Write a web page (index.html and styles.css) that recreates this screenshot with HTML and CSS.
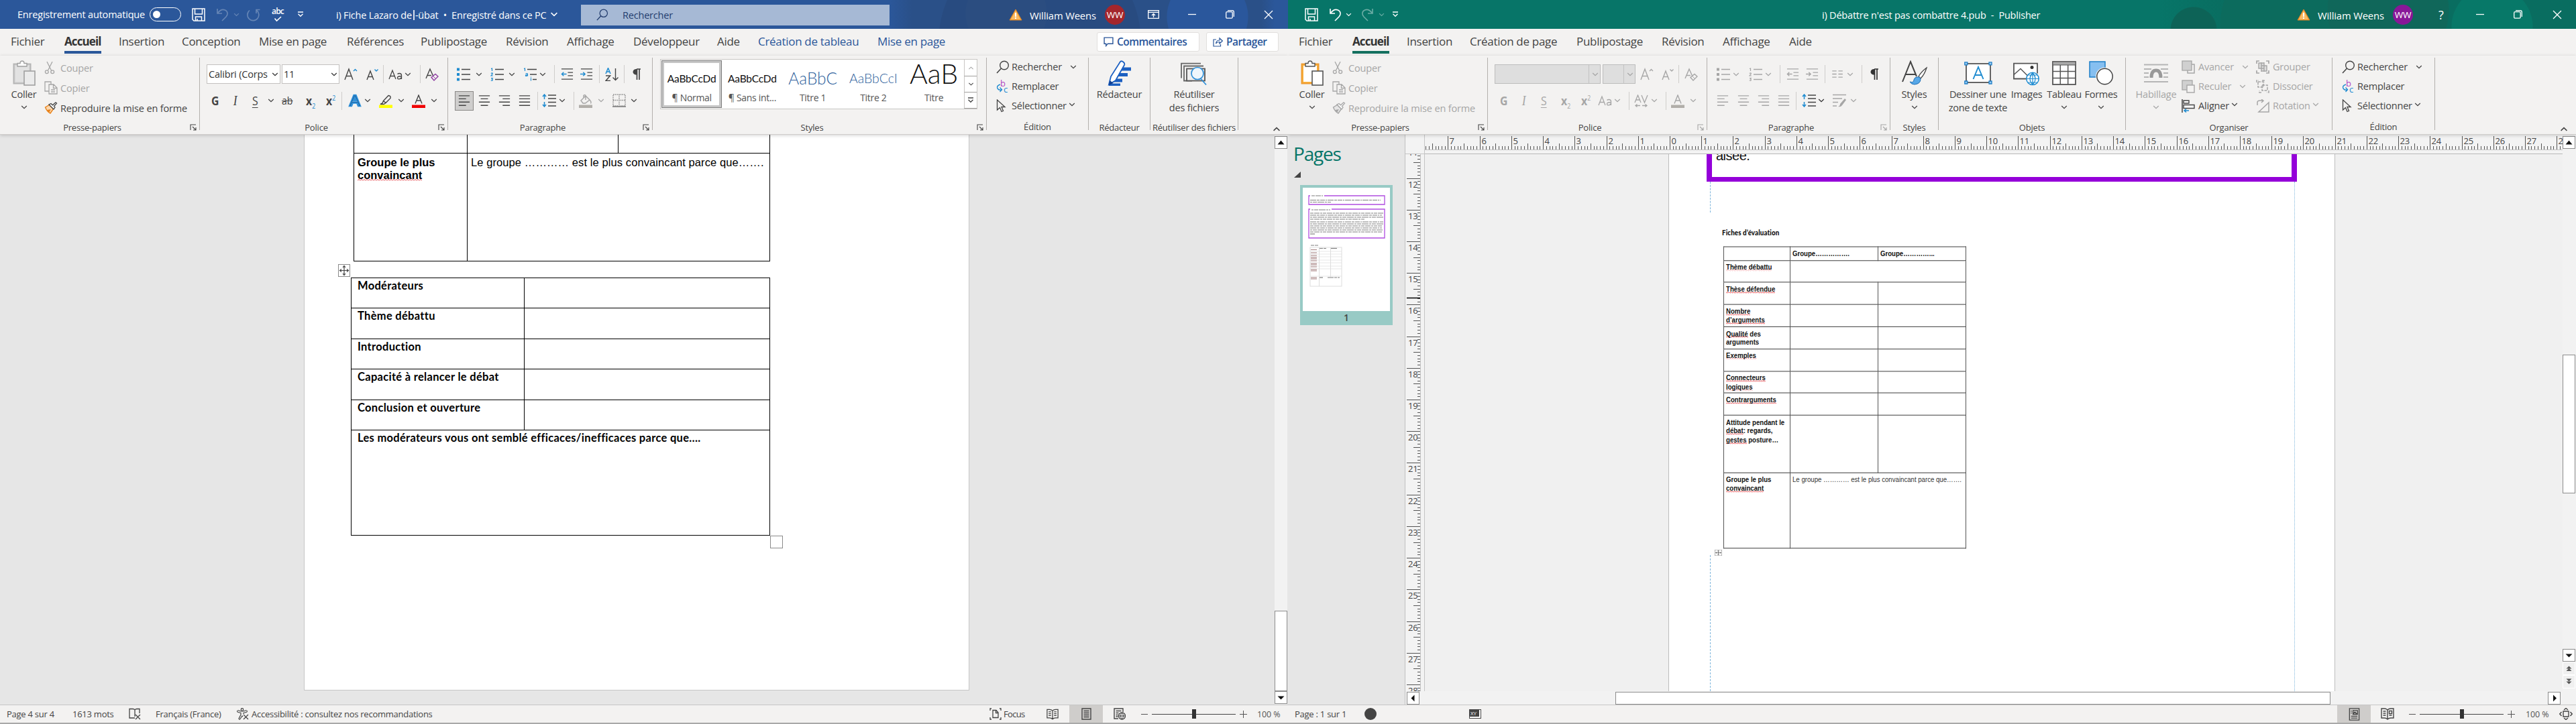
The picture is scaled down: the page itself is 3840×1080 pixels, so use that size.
FILE: index.html
```html
<!DOCTYPE html>
<html lang="fr">
<head>
<meta charset="utf-8">
<title>Word et Publisher</title>
<link rel="stylesheet" href="styles.css">
</head>
<body>
<svg class="defs" width="0" height="0" aria-hidden="true">
  <symbol id="chev" viewBox="0 0 10 6"><path d="M1.2 1l3.8 3.6L8.800 1" fill="none" stroke="currentColor" stroke-width="1.3"/></symbol>
  <symbol id="save" viewBox="0 0 20 20"><path d="M1 1h18v18H3l-2-2zM4.500 1v8h11V1M5.500 19v-6h9v6M8 19v-3" fill="none" stroke="currentColor" stroke-width="1.500"/></symbol>
  <symbol id="undo" viewBox="0 0 20 20"><path d="M2 1v7h7M2.500 7.500C6 3 10 1.500 13.500 3c4.500 2 4.500 7 1.500 10l-6 6" fill="none" stroke="currentColor" stroke-width="1.600"/></symbol>
  <symbol id="redo" viewBox="0 0 20 20"><path d="M18 1v7h-7M17.500 7.500C14 3 10 1.500 6.500 3 2 5 2 10 5 13l6 6" fill="none" stroke="currentColor" stroke-width="1.600"/></symbol>
  <symbol id="repeat" viewBox="0 0 20 20"><path d="M4 3.500A8.500 8.500 0 1 0 14 3M14 8V2.500h5.500" fill="none" stroke="currentColor" stroke-width="1.600"/></symbol>
  <symbol id="custom" viewBox="0 0 10 9"><path d="M1 1h8M1.500 3.800L5 7.300l3.500-3.500" fill="none" stroke="currentColor" stroke-width="1.300"/></symbol>
  <symbol id="glass" viewBox="0 0 20 20"><circle cx="12" cy="7.500" r="6.300" fill="none" stroke="currentColor" stroke-width="1.400"/><path d="M7.500 12L1 19" stroke="currentColor" stroke-width="1.500"/></symbol>
  <symbol id="warn" viewBox="0 0 20 18"><path d="M10 1L1 17h18z" fill="#f7a531" stroke="#d9822b"/><path d="M10 3L3 16h14z" fill="#fff" opacity=".25"/><path d="M9 6h2v6H9zM9 13h2v2H9z" fill="#fff"/></symbol>
  <symbol id="ribbonopt" viewBox="0 0 17 13"><path d="M.7.700h15.600v11.600H.7zM.7 3.300h15.600M8.500 11V5.500M6 8l2.500-2.500L11 8" fill="none" stroke="currentColor" stroke-width="1.300"/></symbol>
  <symbol id="min" viewBox="0 0 12 12"><path d="M0 5.500h12" stroke="currentColor" stroke-width="1.300"/></symbol>
  <symbol id="restore" viewBox="0 0 13 13"><rect x=".7" y="2.700" width="9.500" height="9.500" rx="1.500" fill="none" stroke="currentColor" stroke-width="1.300"/><path d="M3 .7h7q2.300 0 2.300 2.300v7" fill="none" stroke="currentColor" stroke-width="1.300"/></symbol>
  <symbol id="close" viewBox="0 0 14 14"><path d="M1 1l12 12M13 1L1 13" stroke="currentColor" stroke-width="1.300"/></symbol>
  <symbol id="comment" viewBox="0 0 14 14"><path d="M1 1h12v8.500H6L3.500 12.500v-3H1z" fill="none" stroke="currentColor" stroke-width="1.300"/></symbol>
  <symbol id="share" viewBox="0 0 15 15"><path d="M5 4H1v10h10.500v-3M4.500 10C5 6.500 7 5 10 5V2l4.300 4-4.300 4V7.500C7.500 7.500 6 8 4.500 10z" fill="none" stroke="currentColor" stroke-width="1.200"/></symbol>
  <symbol id="paste" viewBox="0 0 34 38"><rect x="1.500" y="5.500" width="25" height="29" fill="var(--board)" stroke="var(--boardline)" stroke-width="2"/><rect x="4" y="8" width="20" height="24" fill="var(--sheet)"/><path d="M7 9V4.500h4a3 3.500 0 0 1 6 0h4V9z" fill="#fafafa" stroke="var(--clip)" stroke-width="1.400"/><rect x="17" y="16" width="16" height="21" fill="var(--sheet2)" stroke="var(--clip)" stroke-width="1.600"/></symbol>
  <symbol id="cut" viewBox="0 0 16 20"><path d="M4 1l6.500 13M12 1L5.500 14" stroke="currentColor" stroke-width="1.300"/><circle cx="3.800" cy="16.300" r="2.400" fill="none" stroke="currentColor" stroke-width="1.300"/><circle cx="12.200" cy="16.300" r="2.400" fill="none" stroke="currentColor" stroke-width="1.300"/></symbol>
  <symbol id="copy" viewBox="0 0 20 20"><path d="M7 15H1V1h9v4M7 5h7l5 5v9H7zM13.500 5v5.500H19M10 13h6M10 16h6" fill="none" stroke="currentColor" stroke-width="1.300"/></symbol>
  <symbol id="brush" viewBox="0 0 20 18"><path d="M1.500 8l6-3.500 6 6L9 17C5 15 3 12 1.500 8z" fill="var(--brushfill)" stroke="var(--brushline)" stroke-width="1.400"/><path d="M4 12l3 4 3-5" fill="var(--brushline)"/><path d="M7 4l7 7 2-3-1.500-1.500L18.500 2 17 .8l-4.500 4L10 2.500z" fill="#fafafa" stroke="currentColor" stroke-width="1.300"/></symbol>
  <symbol id="launch" viewBox="0 0 10 10"><path d="M1 9V1h8M4 4l5 5M9 5v4H5" fill="none" stroke="currentColor" stroke-width="1.100"/></symbol>
  <symbol id="agrow" viewBox="0 0 20 20"><path d="M1 18L7 2l6 16M3 12.500h8" fill="none" stroke="currentColor" stroke-width="1.400"/><path d="M14 5l2.500-2.500L19 5" fill="none" stroke="var(--acc)" stroke-width="1.400"/></symbol>
  <symbol id="ashrink" viewBox="0 0 20 20"><path d="M2 18L7 5l5 13M3.700 13.500h6.600" fill="none" stroke="currentColor" stroke-width="1.400"/><path d="M13.500 2.500L16 5l2.500-2.500" fill="none" stroke="var(--acc)" stroke-width="1.400"/></symbol>
  <symbol id="aa" viewBox="0 0 22 20"><path d="M1 17L6 4l5 13M2.700 12.500h6.600" fill="none" stroke="currentColor" stroke-width="1.300"/><path d="M19.500 17V11.500q0-3-3-3-2 0-3 1M19.500 12.500c-4 0-6 .7-6 2.500 0 3 5 2.500 6-1" fill="none" stroke="currentColor" stroke-width="1.300"/></symbol>
  <symbol id="aclear" viewBox="0 0 20 20"><path d="M1 16L7 2l5 11M3 11.500h6" fill="none" stroke="currentColor" stroke-width="1.400"/><path d="M9 14.500l6-5 4 3.500-6 6z" fill="#f3f2f1" stroke="var(--eraser)" stroke-width="1.400"/><path d="M11.500 12.500l4 4" stroke="var(--eraser)"/></symbol>
  <symbol id="abold" viewBox="0 0 20 20"><path d="M2 18L8.500 2h3L18 18h-3l-1.800-4.500H6.800L5 18zM8 10.500h4L10 5.500z" fill="#fff" stroke="#2e8fd8" stroke-width="2.400"/><path d="M3 18L9.200 3h1.600L17 18M6 12.500h8" fill="none" stroke="#1665a8" stroke-width="1.200"/></symbol>
  <symbol id="hilite" viewBox="0 0 20 20"><path d="M6.500 9.500l7.500-8q4 .5 3 4L10 12.500zM6.500 9.500L5 13l-3 1.500h5L10 12.500" fill="none" stroke="currentColor" stroke-width="1.400"/><path d="M0 15.500h20V20H0z" fill="#ff0"/></symbol>
  <symbol id="acolor" viewBox="0 0 20 20"><path d="M5 13.500L10 1l5 12.500M6.700 9h6.600" fill="none" stroke="currentColor" stroke-width="1.400"/><path d="M0 15.500h20V20H0z" fill="var(--textcolor)"/></symbol>
  <symbol id="av" viewBox="0 0 22 20"><path d="M1 12L5.500 1 10 12M2.500 8h6M11 1l4.500 11L20 1M2 16.500h7M4.500 14.500l-2.500 2 2.500 2M12 16.500h7M16.500 14.500l2.500 2-2.500 2" fill="none" stroke="currentColor" stroke-width="1.300"/></symbol>
  <symbol id="bullets" viewBox="0 0 20 20"><path d="M0 .5h4v4H0zM0 8h4v4H0zM0 15.500h4v4H0z" fill="var(--acc)"/><path d="M7 2.500h13M7 10h13M7 17.500h13" stroke="currentColor" stroke-width="1.500"/></symbol>
  <symbol id="numbers" viewBox="0 0 20 20"><path d="M1 1.500L2.500 1v4M.8 8.500Q3.500 7 3.300 9L1 12h2.800M1 15.500h2.300L2.200 17q2 .5.5 2.300L.8 19" fill="none" stroke="var(--acc)" stroke-width="1.200"/><path d="M7 2.500h13M7 10h13M7 17.500h13" stroke="currentColor" stroke-width="1.500"/></symbol>
  <symbol id="multi" viewBox="0 0 20 20"><path d="M1 1.500L2.500 1v4M3.500 9q3-1 3 .5v3M6.500 10.500q-3.500 0-3 1.500 1 1 3-.5M11.500 15.500v4M11.500 13.500v1" fill="none" stroke="var(--acc)" stroke-width="1.200"/><path d="M6 2.500h14M10 10h10M14 17.500h6" stroke="currentColor" stroke-width="1.500"/></symbol>
  <symbol id="outdent" viewBox="0 0 20 20"><path d="M1 2h18M11 7.500h8M11 12.500h8M1 18h18" stroke="currentColor" stroke-width="1.400"/><path d="M9 10H1.500M4.500 7l-3 3 3 3" fill="none" stroke="var(--acc)" stroke-width="1.500"/></symbol>
  <symbol id="indent" viewBox="0 0 20 20"><path d="M1 2h18M11 7.500h8M11 12.500h8M1 18h18" stroke="currentColor" stroke-width="1.400"/><path d="M0 10h7.500M4.500 7l3 3-3 3" fill="none" stroke="var(--acc)" stroke-width="1.500"/></symbol>
  <symbol id="sort" viewBox="0 0 20 20"><path d="M1 9L4.500.500 8 9M2.200 6h4.600" fill="none" stroke="var(--acc)" stroke-width="1.500"/><path d="M1 12h6.500L1 19.500h7" fill="none" stroke="currentColor" stroke-width="1.500"/><path d="M15.500 1v18M11.500 14.500l4 4 4-4" fill="none" stroke="currentColor" stroke-width="1.400"/></symbol>
  <symbol id="pilcrow" viewBox="0 0 14 20"><path d="M7 2h6M7.500 2v16M11 2v16" stroke="currentColor" stroke-width="1.700"/><path d="M7.500 2C-.5 1.500-.5 11 7.500 10.500z" fill="currentColor"/></symbol>
  <symbol id="cols" viewBox="0 0 18 12"><path d="M0 1h7M0 6h7M0 11h7M10 1h7M10 6h7M10 11h7" stroke="currentColor" stroke-width="1.400"/></symbol>
  <symbol id="alleft" viewBox="0 0 18 20"><path d="M0 2h18M0 7h12M0 12.500h18M0 18h12" stroke="currentColor" stroke-width="1.500"/></symbol>
  <symbol id="alcenter" viewBox="0 0 18 20"><path d="M0 2h18M3 7h12M0 12.500h18M3 18h12" stroke="currentColor" stroke-width="1.500"/></symbol>
  <symbol id="alright" viewBox="0 0 18 20"><path d="M0 2h18M6 7h12M0 12.500h18M6 18h12" stroke="currentColor" stroke-width="1.500"/></symbol>
  <symbol id="aljust" viewBox="0 0 18 20"><path d="M0 2h18M0 7h18M0 12.500h18M0 18h18" stroke="currentColor" stroke-width="1.500"/></symbol>
  <symbol id="spacing" viewBox="0 0 21 20"><path d="M9 2h12M9 7h12M9 12.500h12M9 18h12" stroke="#444" stroke-width="1.500"/><path d="M3.500 1v7M1 4l2.500-3L6 4M3.500 19v-7M1 16l2.500 3L6 16" fill="none" stroke="#1e8bd0" stroke-width="1.500"/></symbol>
  <symbol id="fill" viewBox="0 0 20 20"><path d="M3 9l7-7 6 6-6.500 5H6zM7 5V1.500Q8.500-.5 10 1.500V8M16 8q3 3 1.500 5.500" fill="none" stroke="currentColor" stroke-width="1.400"/><path d="M0 15.500h20V20H0z" fill="#b1aea9"/></symbol>
  <symbol id="borders" viewBox="0 0 20 20"><path d="M1 1h18v17H1zM10 1v17M1 9.500h18" fill="none" stroke="#888" stroke-width="1.400" stroke-dasharray="1.500 1.200"/><path d="M0 19h20" stroke="#777" stroke-width="1.500"/></symbol>
  <symbol id="pstyle" viewBox="0 0 21 20"><path d="M0 1.500h20M0 7h14M0 12.500h8M0 18h6" stroke="currentColor" stroke-width="1.500"/><path d="M11 15l7-8 2 2-6 8q-2 3-6 2 3-1 3-4z" fill="currentColor"/></symbol>
  <symbol id="replace" viewBox="0 0 20 20"><text x="6" y="10" class="rb">b</text><text x="11" y="19" class="rc">c</text><path d="M6 7Q0 9 2 13q2 3 6 2M5.500 11.500l3 3.300-3 3.200" fill="none" stroke="#1e8bd0" stroke-width="1.400"/></symbol>
  <symbol id="cursor" viewBox="0 0 15 20"><path d="M1.500 1v15l4-3.500 2.500 6 2.500-1-2.500-6H13z" fill="none" stroke="currentColor" stroke-width="1.300"/></symbol>
  <symbol id="editor" viewBox="0 0 38 38"><path d="M14 21.500h17M18 13h18M3 37h17M8 30h15" stroke="#1b5fc1" stroke-width="5"/><path d="M3 36l3-12L20 2q2-2 5 1 2 2 1 4L13 30z" fill="#fff" stroke="#1b5fc1" stroke-width="1.800"/><path d="M3 37l1.500-7 5 4z" fill="#103f91"/></symbol>
  <symbol id="reuse" viewBox="0 0 40 34"><path d="M30 1H1v22M34 5H5v22h12" fill="none" stroke="#666" stroke-width="1.800"/><rect x="9" y="9" width="27" height="18" fill="#eee" stroke="#555" stroke-width="1.800"/><circle cx="25" cy="16" r="9" fill="#eef6fc" stroke="#2e8fd8" stroke-width="1.700"/><path d="M30 24l8 9" stroke="#2e8fd8" stroke-width="1.800"/></symbol>
  <symbol id="pstyles" viewBox="0 0 38 36"><path d="M1 31L13 1l9 22M5 20h15" fill="none" stroke="#444" stroke-width="2"/><path d="M37 10q-8 6-12 13l3 3q6-6 9-16z" fill="#fff" stroke="#444" stroke-width="1.300"/><path d="M23 24q4-1 5 3 0 7-9 8-5 0-7-4 6 2 6-3 1-4 5-4z" fill="#57a8e8" stroke="#1f6fb5"/></symbol>
  <symbol id="textbox" viewBox="0 0 42 34"><rect x="3" y="3" width="36" height="28" fill="#fff" stroke="#555" stroke-width="1.800"/><path d="M.8.800h4v4h-4zM37 .8h4v4h-4zM.8 29h4v4h-4zM37 29h4v4h-4z" fill="#9ccdf2" stroke="#1e7fc8" stroke-width="1.300"/><path d="M13.500 26L21 8l7.500 18M16.500 20h9" fill="none" stroke="#1e8bd0" stroke-width="1.900"/></symbol>
  <symbol id="images" viewBox="0 0 40 34"><path d="M21 24H1V1h35v15" fill="#fff" stroke="#555" stroke-width="1.800"/><path d="M1 18l10-9 14 14" fill="none" stroke="#555" stroke-width="1.500"/><circle cx="28" cy="7" r="2.500" fill="#333"/><circle cx="29" cy="24" r="9.200" fill="#fff" stroke="#1e8bd0" stroke-width="1.500"/><path d="M20 24h18M22 18.500h14M22 29.500h14M29 15v18M29 15q-8 9 0 18M29 15q8 9 0 18" fill="none" stroke="#1e8bd0" stroke-width="1.200"/></symbol>
  <symbol id="table" viewBox="0 0 36 36"><rect x="1" y="1" width="34" height="34" fill="#fff" stroke="#555" stroke-width="1.800"/><path d="M1 1h34v5H1z" fill="#aaa" stroke="#555"/><path d="M1 15.500h34M1 25.500h34M12.300 6v29M23.700 6v29" stroke="#555" stroke-width="1.500"/></symbol>
  <symbol id="shapes" viewBox="0 0 36 36"><rect x="1" y="1" width="23" height="23" fill="#86bff0" stroke="#1e7fc8" stroke-width="1.500"/><circle cx="23.500" cy="23" r="13.500" fill="#f3f2f1"/><circle cx="23.500" cy="23" r="11.700" fill="#fff" stroke="#444" stroke-width="1.500"/></symbol>
  <symbol id="wrap" viewBox="0 0 38 30"><path d="M1 2.500h36M1 9h11M26 9h11M1 15h7M30 15h7M1 21h7M30 21h7M1 28h36" stroke="#b5b5b5" stroke-width="2"/><path d="M12 22q0-11 7-11t7 11" fill="none" stroke="#999" stroke-width="5"/></symbol>
  <symbol id="fwd" viewBox="0 0 20 20"><path d="M15 6h4v13H9v-4" fill="none" stroke="currentColor" stroke-width="1.500"/><rect x="1" y="1" width="14" height="14" fill="#d0d0d0" stroke="currentColor" stroke-width="1.300"/></symbol>
  <symbol id="back" viewBox="0 0 20 20"><rect x="1" y="1" width="15" height="14" fill="#d0d0d0" stroke="currentColor" stroke-width="1.300"/><rect x="8" y="8" width="11" height="11" fill="#f3f2f1" stroke="currentColor" stroke-width="1.400"/></symbol>
  <symbol id="align" viewBox="0 0 20 20"><path d="M1 0v20" stroke="#444" stroke-width="1.500"/><path d="M3 2h8v4H3zM3 8.500h16v5H3z" fill="#fff" stroke="#444" stroke-width="1.400"/><path d="M11 17H4M7 14.500L4 17l3 2.500" fill="none" stroke="#1e8bd0" stroke-width="1.500"/></symbol>
  <symbol id="group" viewBox="0 0 20 20"><path d="M1 5V1h4M15 1h4v4M19 15v4h-4M5 19H1v-4" fill="none" stroke="currentColor" stroke-width="1.700"/><path d="M4 4h8v8H4zM8 8h8v8H8zM8 3v14M12 3v14" fill="#ddd" stroke="currentColor" stroke-width="1.400"/></symbol>
  <symbol id="ungroup" viewBox="0 0 20 20"><path d="M1 4V1h3M9 1h3v3M19 16v3h-3M8 19H5v-3M9 8h8v8H9zM3 3h8v8H3z" fill="none" stroke="currentColor" stroke-width="1.500" stroke-dasharray="4 1.500"/></symbol>
  <symbol id="rotate" viewBox="0 0 20 20"><path d="M19 5v14H4zM2 9V5q0-3 4-3h5M8 0l3 2.300L8 5" fill="none" stroke="currentColor" stroke-width="1.500"/></symbol>
  <symbol id="book" viewBox="0 0 20 18"><path d="M10 3Q8 1 5 1H1v14h4q3 0 5 2 2-2 5-2h4V1h-4q-3 0-5 2zM10 3v14M3.500 5h4M3.500 8h4M3.500 11h4M12.500 5h4M12.500 8h4M12.500 11h4" fill="none" stroke="currentColor" stroke-width="1.400"/></symbol>
  <symbol id="pubbook" viewBox="0 0 20 18"><path d="M10 3Q8 1 5 1H1v14h4q3 0 5 2 2-2 5-2h4V1h-4q-3 0-5 2zM10 3v14M3.500 5h4M3.500 8h4M3.500 11h4M12.500 11h4M12.500 4.500h4v4h-4z" fill="none" stroke="currentColor" stroke-width="1.400"/></symbol>
  <symbol id="page" viewBox="0 0 15 18"><path d="M1 1h13v16H1zM3.500 4.500h8M3.500 7.500h8M3.500 10.500h8M3.500 13.500h8" fill="none" stroke="currentColor" stroke-width="1.400"/></symbol>
  <symbol id="pubpage" viewBox="0 0 17 20"><path d="M1 1h15v18H1zM6.500 4h7v6h-7zM6.500 9l3-2.500L13 10M3 5h1.500M3 8h1.500M3.500 13h10M3.500 16h10" fill="none" stroke="currentColor" stroke-width="1.400"/></symbol>
  <symbol id="web" viewBox="0 0 18 18"><path d="M7 16H1V1h13v5M3.500 4.500h8M3.500 7.500h4M3.500 10.500h3M3.500 13h3" fill="none" stroke="currentColor" stroke-width="1.400"/><circle cx="12.500" cy="12" r="5" fill="#eee" stroke="currentColor" stroke-width="1.300"/><path d="M7.500 12h10M12.500 7q-4 5 0 10M12.500 7q4 5 0 10" fill="none" stroke="currentColor"/></symbol>
  <symbol id="focus" viewBox="0 0 18 18"><path d="M1 4V1h2M15 1h2v3M17 14v3h-2M3 17H1v-3M5 3.500h5l3 3.500v7.500H5zM9.500 3.500V7.500H13" fill="none" stroke="currentColor" stroke-width="1.300"/></symbol>
  <symbol id="proof" viewBox="0 0 18 18"><path d="M9 3v10M9 15H1V1.500h5q2 0 3 1.500 1-1.500 3-1.500h4V8M10 10l7 7M17 10l-7 7" fill="none" stroke="currentColor" stroke-width="1.300"/></symbol>
  <symbol id="access" viewBox="0 0 18 18"><circle cx="8" cy="2.500" r="1.800" fill="none" stroke="currentColor" stroke-width="1.200"/><path d="M1 4q-1 2 1 2.500l4 1V10l-3 6q1 2 2 .5L8 12l1 1M15 4q1 2-1 2.500l-4 1V9M1.500 3.500L6 5h4l4.500-1.500M10 10l7 7M17 10l-7 7" fill="none" stroke="currentColor" stroke-width="1.200"/></symbol>
  <symbol id="fit" viewBox="0 0 20 18"><path d="M6 5h8v8H6zM7 3l3-2.500L13 3M7 15l3 2.500 3-2.500M3.500 6L.8 9l2.700 3M16.500 6l2.700 3-2.700 3" fill="none" stroke="currentColor" stroke-width="1.400"/></symbol>
  <symbol id="move" viewBox="0 0 18 19"><rect x=".5" y=".5" width="17" height="18" fill="#fff" stroke="#8a8a8a"/><path d="M9 2.500v14M2.500 9.500h13M7 5l2-2.500L11 5M7 14l2 2.500 2-2.500M5 7.500l-2.500 2 2.500 2M13 7.500l2.500 2-2.500 2" fill="none" stroke="#444" stroke-width="1.200"/></symbol>
  <symbol id="up" viewBox="0 0 19 19"><rect x=".5" y=".5" width="18" height="18" fill="#fff" stroke="#8c8c8c"/><path d="M9.500 6.500l5 6h-10z" fill="#111"/></symbol>
  <symbol id="down" viewBox="0 0 19 19"><rect x=".5" y=".5" width="18" height="18" fill="#fff" stroke="#8c8c8c"/><path d="M9.500 12.500l5-5h-10z" fill="#111"/></symbol>
  <symbol id="left" viewBox="0 0 19 19"><rect x=".5" y=".5" width="18" height="18" fill="#fff" stroke="#8c8c8c"/><path d="M6.500 9.500l5-5v10z" fill="#111"/></symbol>
  <symbol id="right" viewBox="0 0 19 19"><rect x=".5" y=".5" width="18" height="18" fill="#fff" stroke="#8c8c8c"/><path d="M13 9.500l-5-5v10z" fill="#111"/></symbol>
  <symbol id="pgup" viewBox="0 0 19 20"><path d="M.5.500h18v19H.5z" fill="#f0f0f0" stroke="#fff"/><path d="M9.500 6.500l4 4h-8zM9.500 10l4 4h-8z" fill="#555"/></symbol>
  <symbol id="pgdown" viewBox="0 0 19 20"><path d="M.5.500h18v19H.5z" fill="#f0f0f0" stroke="#fff"/><path d="M9.500 9.500l4-4h-8zM9.500 13.500l4-4h-8z" fill="#555"/></symbol>
</svg>

<div class="desktop">
<!-- Word -->
<section class="app word">
  <header class="title">
    <span>Enregistrement automatique</span>
    <span class="toggle"></span>
    <svg width="20" height="20"><use href="#save"/></svg>
    <svg class="dim" width="20" height="20"><use href="#undo"/></svg>
    <svg class="dim" width="9" height="6"><use href="#chev"/></svg>
    <svg class="dim" width="20" height="20"><use href="#repeat"/></svg>
    <span class="spell"><b>abc</b><svg width="12" height="8" viewBox="0 0 12 8"><path d="M1.500 3.500l3 3.500L11 1" fill="none" stroke="#fff" stroke-width="1.600"/></svg></span>
    <svg width="10" height="9"><use href="#custom"/></svg>
    <span class="doc">i) Fiche Lazaro de<i class="ibeam"></i>-übat&nbsp; •&nbsp; Enregistré dans ce PC</span>
    <svg width="12" height="7"><use href="#chev"/></svg>
    <span class="search"><svg width="18" height="18"><use href="#glass"/></svg>Rechercher</span>
    <svg width="20" height="18"><use href="#warn"/></svg>
    <span class="user">William Weens</span>
    <span class="avatar">WW</span>
    <svg width="17" height="13"><use href="#ribbonopt"/></svg>
    <svg width="12" height="12"><use href="#min"/></svg>
    <svg width="13" height="13"><use href="#restore"/></svg>
    <svg width="14" height="14"><use href="#close"/></svg>
  </header>
  <nav class="tabs">
    <span>Fichier</span><b>Accueil</b><span>Insertion</span><span>Conception</span><span>Mise en page</span><span>Références</span><span>Publipostage</span><span>Révision</span><span>Affichage</span><span>Développeur</span><span>Aide</span><span class="ctx">Création de tableau</span><span class="ctx">Mise en page</span>
    <span class="pill"><svg width="15" height="15"><use href="#comment"/></svg>Commentaires</span>
    <span class="pill"><svg width="15" height="15"><use href="#share"/></svg>Partager</span>
  </nav>
  <div class="ribbon">
    <div class="group g-clip">
      <div class="body cliprow off-paste">
        <div class="big"><svg width="34" height="38"><use href="#paste"/></svg><span>Coller</span><svg width="10" height="6"><use href="#chev"/></svg></div>
        <div class="list3">
          <div class="off"><svg width="16" height="20"><use href="#cut"/></svg>Couper</div>
          <div class="off"><svg width="20" height="20"><use href="#copy"/></svg>Copier</div>
          <div><svg width="20" height="18"><use href="#brush"/></svg>Reproduire la mise en forme</div>
        </div>
      </div>
      <div class="label"><span>Presse-papiers</span><svg width="10" height="10"><use href="#launch"/></svg></div>
    </div>
    <div class="group g-font">
      <div class="body">
        <div class="row w-font1">
          <span class="combo">Calibri (Corps<svg width="10" height="6"><use href="#chev"/></svg></span>
          <span class="combo">11<svg width="10" height="6"><use href="#chev"/></svg></span>
          <svg width="20" height="20"><use href="#agrow"/></svg><svg width="20" height="20"><use href="#ashrink"/></svg><i class="sep"></i>
          <svg width="22" height="20"><use href="#aa"/></svg><svg width="10" height="6"><use href="#chev"/></svg><i class="sep"></i>
          <svg width="20" height="20"><use href="#aclear"/></svg>
        </div>
        <div class="row low w-font2">
          <b class="g">G</b><i class="g it">I</i><span class="g ul">S</span><svg width="10" height="6"><use href="#chev"/></svg>
          <s class="g st">ab</s><b class="g">x<sub>2</sub></b><b class="g">x<sup>2</sup></b><i class="sep"></i>
          <svg width="20" height="20"><use href="#abold"/></svg><svg width="10" height="6"><use href="#chev"/></svg>
          <svg class="bar" width="20" height="20"><use href="#hilite"/></svg><svg width="10" height="6"><use href="#chev"/></svg>
          <svg class="bar" width="20" height="20"><use href="#acolor"/></svg><svg width="10" height="6"><use href="#chev"/></svg>
        </div>
      </div>
      <div class="label"><span>Police</span><svg width="10" height="10"><use href="#launch"/></svg></div>
    </div>
    <div class="group g-para">
      <div class="body">
        <div class="row w-para1">
          <svg width="20" height="20"><use href="#bullets"/></svg><svg width="10" height="6"><use href="#chev"/></svg>
          <svg width="20" height="20"><use href="#numbers"/></svg><svg width="10" height="6"><use href="#chev"/></svg>
          <svg width="20" height="20"><use href="#multi"/></svg><svg width="10" height="6"><use href="#chev"/></svg><i class="sep"></i>
          <svg width="19" height="19"><use href="#outdent"/></svg><svg width="19" height="19"><use href="#indent"/></svg><i class="sep"></i>
          <svg width="20" height="20"><use href="#sort"/></svg><i class="sep"></i><svg width="14" height="20"><use href="#pilcrow"/></svg>
        </div>
        <div class="row low w-para2">
          <span class="selbox"><svg width="18" height="18"><use href="#alleft"/></svg></span>
          <svg width="18" height="18"><use href="#alcenter"/></svg><svg width="18" height="18"><use href="#alright"/></svg><svg width="18" height="18"><use href="#aljust"/></svg><i class="sep"></i>
          <svg width="21" height="20"><use href="#spacing"/></svg><svg width="10" height="6"><use href="#chev"/></svg><i class="sep"></i>
          <svg class="bar off" width="20" height="20"><use href="#fill"/></svg><svg class="off" width="10" height="6"><use href="#chev"/></svg>
          <svg width="20" height="20"><use href="#borders"/></svg><svg width="10" height="6"><use href="#chev"/></svg>
        </div>
      </div>
      <div class="label"><span>Paragraphe</span><svg width="10" height="10"><use href="#launch"/></svg></div>
    </div>
    <div class="group g-styles">
      <div class="body">
        <div class="gallery">
          <div class="sty sel"><span>AaBbCcDd</span><em>¶ Normal</em></div>
          <div class="sty"><span>AaBbCcDd</span><em>¶ Sans int...</em></div>
          <div class="sty t1"><span>AaBbC</span><em>Titre 1</em></div>
          <div class="sty t2"><span>AaBbCcI</span><em>Titre 2</em></div>
          <div class="sty t3"><span>AaB</span><em>Titre</em></div>
          <div class="gscroll"><span class="off"><svg class="flip" width="9" height="5"><use href="#chev"/></svg></span><span><svg width="9" height="5"><use href="#chev"/></svg></span><span><svg width="10" height="9"><use href="#custom"/></svg></span></div>
        </div>
      </div>
      <div class="label"><span>Styles</span><svg width="10" height="10"><use href="#launch"/></svg></div>
    </div>
    <div class="group g-edit">
      <div class="body edit">
        <div><svg width="20" height="20"><use href="#glass"/></svg>Rechercher<svg class="far" width="10" height="6"><use href="#chev"/></svg></div>
        <div><svg width="20" height="20"><use href="#replace"/></svg>Remplacer</div>
        <div><svg width="15" height="20"><use href="#cursor"/></svg>Sélectionner<svg class="near" width="10" height="6"><use href="#chev"/></svg></div>
      </div>
      <div class="label nol"><span>Édition</span></div>
    </div>
    <div class="group g-red">
      <div class="body"><div class="big wide"><svg width="38" height="38"><use href="#editor"/></svg><span>Rédacteur</span></div></div>
      <div class="label nol"><span>Rédacteur</span></div>
    </div>
    <div class="group g-reuse">
      <div class="body"><div class="big wide"><svg class="lower" width="40" height="38" viewBox="0 -3 40 37"><use href="#reuse" width="40" height="34"/></svg><span>Réutiliser<br>des fichiers</span></div></div>
      <div class="label nol"><span>Réutiliser des fichiers</span></div>
    </div>
    <svg class="collapse" width="12" height="7"><use href="#chev"/></svg>
  </div>
  <main class="wwork">
    <div class="wcanvas">
      <article class="sheet">
        <table class="tbl1">
          <colgroup><col class="a"><col class="b"><col class="c"></colgroup>
          <tr class="cut"><td></td><td></td><td></td></tr>
          <tr class="tall"><td><b>Groupe le plus<br><u class="sq">convaincant</u></b></td><td colspan="2" class="wide">Le groupe ………… est le plus convaincant parce que…….</td></tr>
        </table>
        <table class="tbl2">
          <colgroup><col class="a"><col class="b"></colgroup>
          <tr><td>Modérateurs</td><td></td></tr>
          <tr><td>Thème débattu</td><td></td></tr>
          <tr><td>Introduction</td><td></td></tr>
          <tr><td>Capacité à relancer le débat</td><td></td></tr>
          <tr><td>Conclusion et ouverture</td><td></td></tr>
          <tr class="last"><td colspan="2">Les modérateurs vous ont semblé efficaces/inefficaces parce que….</td></tr>
        </table>
        <svg class="mv" width="18" height="19"><use href="#move"/></svg>
        <i class="rs"></i>
      </article>
    </div>
    <div class="vscroll wv"><svg width="19" height="19"><use href="#up"/></svg><i class="thumb"></i><svg width="19" height="19"><use href="#down"/></svg></div>
  </main>
  <footer class="status w-status">
    <span>Page 4 sur 4</span><span>1613 mots</span><svg width="18" height="18"><use href="#proof"/></svg><span>Français (France)</span>
    <svg width="18" height="18"><use href="#access"/></svg><span>Accessibilité : consultez nos recommandations</span>
    <svg width="18" height="18"><use href="#focus"/></svg><span class="tight">Focus</span>
    <svg width="18" height="17"><use href="#book"/></svg>
    <span class="view"><svg width="15" height="18"><use href="#page"/></svg></span>
    <svg width="18" height="18"><use href="#web"/></svg>
    <i class="minus"></i><i class="slider"></i><i class="plus"></i><span class="pct">100 %</span>
  </footer>
</section>

<!-- Publisher -->
<section class="app pub">
  <header class="title">
    <svg width="20" height="20"><use href="#save"/></svg>
    <svg width="20" height="20"><use href="#undo"/></svg>
    <svg width="9" height="6"><use href="#chev"/></svg>
    <svg class="dim" width="20" height="20"><use href="#redo"/></svg>
    <svg class="dim" width="9" height="6"><use href="#chev"/></svg>
    <svg width="10" height="9"><use href="#custom"/></svg>
    <span class="doc">i) Débattre n'est pas combattre 4.pub&nbsp; -&nbsp; Publisher</span>
    <svg width="20" height="18"><use href="#warn"/></svg>
    <span class="user">William Weens</span>
    <span class="avatar">WW</span>
    <span class="help">?</span>
    <svg width="12" height="12"><use href="#min"/></svg>
    <svg width="13" height="13"><use href="#restore"/></svg>
    <svg width="14" height="14"><use href="#close"/></svg>
  </header>
  <nav class="tabs">
    <span>Fichier</span><b>Accueil</b><span>Insertion</span><span>Création de page</span><span>Publipostage</span><span>Révision</span><span>Affichage</span><span>Aide</span>
  </nav>
  <div class="ribbon">
    <div class="group g-clip">
      <div class="body cliprow on-paste">
        <div class="big"><svg width="34" height="38"><use href="#paste"/></svg><span>Coller</span><svg width="10" height="6"><use href="#chev"/></svg></div>
        <div class="list3 off">
          <div><svg width="16" height="20"><use href="#cut"/></svg>Couper</div>
          <div><svg width="20" height="20"><use href="#copy"/></svg>Copier</div>
          <div><svg width="20" height="18"><use href="#brush"/></svg>Reproduire la mise en forme</div>
        </div>
      </div>
      <div class="label"><span>Presse-papiers</span><svg width="10" height="10"><use href="#launch"/></svg></div>
    </div>
    <div class="group p-font">
      <div class="body off">
        <div class="row p-font1">
          <span class="combo gray"><svg width="10" height="6"><use href="#chev"/></svg></span>
          <span class="combo gray"><svg width="10" height="6"><use href="#chev"/></svg></span>
          <svg width="20" height="20"><use href="#agrow"/></svg><svg width="20" height="20"><use href="#ashrink"/></svg><i class="sep"></i>
          <svg width="20" height="20"><use href="#aclear"/></svg>
        </div>
        <div class="row low p-font2">
          <b class="g">G</b><i class="g it">I</i><span class="g ul">S</span><b class="g">x<sub>2</sub></b><b class="g">x<sup>2</sup></b>
          <svg width="22" height="20"><use href="#aa"/></svg><svg width="10" height="6"><use href="#chev"/></svg><i class="sep"></i>
          <svg class="bar" width="22" height="20"><use href="#av"/></svg><svg width="10" height="6"><use href="#chev"/></svg><i class="sep"></i>
          <svg class="bar" width="20" height="20"><use href="#acolor"/></svg><svg width="10" height="6"><use href="#chev"/></svg>
        </div>
      </div>
      <div class="label offl"><span>Police</span><svg width="10" height="10"><use href="#launch"/></svg></div>
    </div>
    <div class="group p-para">
      <div class="body off">
        <div class="row p-para1">
          <svg width="20" height="20"><use href="#bullets"/></svg><svg width="10" height="6"><use href="#chev"/></svg>
          <svg width="20" height="20"><use href="#numbers"/></svg><svg width="10" height="6"><use href="#chev"/></svg><i class="sep"></i>
          <svg width="19" height="19"><use href="#outdent"/></svg><svg width="19" height="19"><use href="#indent"/></svg><i class="sep"></i>
          <svg width="17" height="11"><use href="#cols"/></svg><svg width="10" height="6"><use href="#chev"/></svg><i class="sep"></i>
          <svg class="on" width="14" height="20"><use href="#pilcrow"/></svg>
        </div>
        <div class="row low p-para2">
          <svg width="18" height="18"><use href="#alleft"/></svg><svg width="18" height="18"><use href="#alcenter"/></svg><svg width="18" height="18"><use href="#alright"/></svg><svg width="18" height="18"><use href="#aljust"/></svg><i class="sep"></i>
          <svg width="21" height="20"><use href="#spacing"/></svg><svg class="on" width="10" height="6"><use href="#chev"/></svg>
          <svg width="21" height="20"><use href="#pstyle"/></svg><svg width="10" height="6"><use href="#chev"/></svg>
        </div>
      </div>
      <div class="label offl"><span>Paragraphe</span><svg width="10" height="10"><use href="#launch"/></svg></div>
    </div>
    <div class="group p-styles">
      <div class="body"><div class="big wide"><svg width="38" height="38"><use href="#pstyles"/></svg><span>Styles</span><svg width="10" height="6"><use href="#chev"/></svg></div></div>
      <div class="label nol"><span>Styles</span></div>
    </div>
    <div class="group p-obj">
      <div class="body bigs">
        <div class="big"><svg width="42" height="38"><use href="#textbox"/></svg><span>Dessiner une<br>zone de texte</span></div>
        <div class="big"><svg class="lower" width="40" height="38" viewBox="0 -3 40 37"><use href="#images" width="40" height="34"/></svg><span>Images</span></div>
        <div class="big"><svg width="36" height="38"><use href="#table"/></svg><span>Tableau</span><svg width="10" height="6"><use href="#chev"/></svg></div>
        <div class="big"><svg width="36" height="38"><use href="#shapes"/></svg><span>Formes</span><svg width="10" height="6"><use href="#chev"/></svg></div>
      </div>
      <div class="label nol"><span>Objets</span></div>
    </div>
    <div class="group p-org">
      <div class="body org">
        <div class="big off"><svg width="38" height="38"><use href="#wrap"/></svg><span>Habillage</span><svg width="10" height="6"><use href="#chev"/></svg></div>
        <div class="edit o1">
          <div class="off"><svg width="20" height="20"><use href="#fwd"/></svg>Avancer<svg class="far" width="10" height="6"><use href="#chev"/></svg></div>
          <div class="off"><svg width="20" height="20"><use href="#back"/></svg>Reculer<svg class="far" width="10" height="6"><use href="#chev"/></svg></div>
          <div><svg width="20" height="20"><use href="#align"/></svg>Aligner<svg class="near" width="10" height="6"><use href="#chev"/></svg></div>
        </div>
        <div class="edit o1 off">
          <div><svg width="20" height="20"><use href="#group"/></svg>Grouper</div>
          <div><svg width="20" height="20"><use href="#ungroup"/></svg>Dissocier</div>
          <div><svg width="20" height="20"><use href="#rotate"/></svg>Rotation<svg class="near" width="10" height="6"><use href="#chev"/></svg></div>
        </div>
      </div>
      <div class="label nol"><span>Organiser</span></div>
    </div>
    <div class="group p-edit">
      <div class="body edit">
        <div><svg width="20" height="20"><use href="#glass"/></svg>Rechercher<svg class="far" width="10" height="6"><use href="#chev"/></svg></div>
        <div><svg width="20" height="20"><use href="#replace"/></svg>Remplacer</div>
        <div><svg width="15" height="20"><use href="#cursor"/></svg>Sélectionner<svg class="near" width="10" height="6"><use href="#chev"/></svg></div>
      </div>
      <div class="label nol"><span>Édition</span></div>
    </div>
    <svg class="collapse" width="12" height="7"><use href="#chev"/></svg>
  </div>
  <main class="pwork">
    <aside class="pages">
      <h2>Pages</h2>
      <i class="tri"></i>
      <div class="pthumb"><svg id="mini" width="130" height="184" viewBox="0 0 130 184"></svg><b>1</b></div>
    </aside>
    <div class="corner"></div>
    <svg id="hruler" width="1696" height="29"></svg>
    <div class="vscroll pv"><svg width="19" height="19"><use href="#up"/></svg><i class="thumb"></i><svg width="19" height="19"><use href="#down"/></svg><svg width="19" height="20"><use href="#pgup"/></svg><svg width="19" height="20"><use href="#pgdown"/></svg></div>
    <svg id="vruler" width="29" height="801"></svg>
    <div class="pcanvas">
      <article class="psheet">
        <i class="guide ga"></i><i class="guide gb"></i><i class="guide gc"></i>
        <div class="frame">aisée.</div>
        <div class="picture">
          <h3>Fiches d’évaluation</h3>
          <table class="eval">
            <colgroup><col class="a"><col class="b"><col class="c"></colgroup>
            <tr class="r0"><td></td><td>Groupe…………….</td><td>Groupe…………...</td></tr>
            <tr><td><u class="sq">Thème débattu</u></td><td colspan="2"></td></tr>
            <tr><td><u class="sq">Thèse défendue</u></td><td></td><td></td></tr>
            <tr><td><u class="sq">Nombre</u><br><u class="sq">d’arguments</u></td><td></td><td></td></tr>
            <tr><td><u class="sq">Qualité</u> des<br>arguments</td><td></td><td></td></tr>
            <tr><td><u class="sq">Exemples</u></td><td></td><td></td></tr>
            <tr><td><u class="sq">Connecteurs</u><br><u class="sq">logiques</u></td><td></td><td></td></tr>
            <tr><td><u class="sq">Contrarguments</u></td><td></td><td></td></tr>
            <tr class="r8"><td>Attitude pendant le<br><u class="sq">débat</u>: regards,<br><u class="sq">gestes</u> posture…</td><td></td><td></td></tr>
            <tr class="r9"><td>Groupe le plus<br><u class="sq">convaincant</u></td><td colspan="2" class="n">Le groupe ………… est le plus convaincant parce que…….</td></tr>
          </table>
        </div>
        <svg class="pmv" width="11" height="9" viewBox="0 0 18 19" preserveAspectRatio="none"><use href="#move" width="18" height="19"/></svg>
      </article>
    </div>
    <div class="hscroll"><svg width="19" height="19"><use href="#left"/></svg><i class="thumb"></i><svg width="19" height="19"><use href="#right"/></svg></div>
  </main>
  <footer class="status p-status">
    <span class="tight2">Page : 1 sur 1</span><i class="dot"></i><span class="xy">XY</span>
    <span class="view"><svg width="17" height="19"><use href="#pubpage"/></svg></span>
    <svg width="20" height="18"><use href="#pubbook"/></svg>
    <i class="minus"></i><i class="slider"></i><i class="plus"></i><span class="pct">100 %</span>
    <svg width="20" height="18"><use href="#fit"/></svg>
  </footer>
</section>
</div>
<script src="rulers.js"></script>
</body>
</html>
```
FILE: styles.css
```css
* { box-sizing: border-box; }
body { margin: 0; width: 3840px; height: 1080px; overflow: hidden; font-family: "Open Sans", "Noto Sans", sans-serif; font-size: 14.5px; letter-spacing: -0.2px; color: #444; background: #e6e6e6; }
svg { display: block; flex: none; overflow: visible; }
.defs { position: absolute; }
.desktop { display: flex; width: 3840px; height: 1080px; }
.app { width: 1920px; height: 1080px; display: flex; flex-direction: column; background: #f3f2f1; border-bottom: 2px solid #a9a9a9; --acc: #1e8bd0; --eraser: #8f3fa3; --textcolor: #f00000; overflow: hidden; }

/* title bars */
.title { height: 43px; flex: none; display: grid; align-items: center; color: #fff; white-space: nowrap; }
.word .title { background: radial-gradient(circle at 1500px 20px, #2b4d80 0 60px, transparent 61px), radial-gradient(circle at 1800px 25px, #2a579c 0 60px, transparent 61px), radial-gradient(circle at 1550px 60px, #284b80 0 150px, transparent 151px), linear-gradient(90deg, #2b579a 0 1326px, #2a5088 1360px 1880px, #2b579a 1900px); padding-left: 26px;
  grid-template-columns: 197px 63px 36px 26px 20px 37px 38px 58px 319px 46px 638px 31px 112px 64px 60px 56px 57px 14px; }
.pub .title { background: radial-gradient(circle at 1350px 45px, #0d6357 0 34px, transparent 35px), radial-gradient(circle at 1795px 40px, #077868 0 60px, transparent 61px), radial-gradient(circle at 1640px 15px, #10675a 0 90px, transparent 91px), radial-gradient(circle at 1520px 40px, #0c6b5d 0 130px, transparent 131px), linear-gradient(90deg, #077568 0 1300px, #096d60 1400px); padding-left: 25px;
  grid-template-columns: 36px 25px 22px 27px 20px 641px 708px 31px 112px 68px 56px 56px 58px 14px; }
.dim { opacity: .4; }
.word .dim { opacity: .28; }
.toggle { width: 47px; height: 21px; border: 1.5px solid #fff; border-radius: 11px; display: flex; align-items: center; padding-left: 4px; }
.toggle::before { content: ""; width: 11px; height: 11px; border-radius: 50%; background: #fff; }
.spell { display: flex; flex-direction: column; width: 18px; align-items: center; font-size: 12px; line-height: 10px; gap: 2px; letter-spacing: -0.8px; }
.spell b { font-weight: 600; }
.doc { line-height: 20px; padding-top: 2px; }
.ibeam { display: inline-block; width: 2px; height: 15px; background: #d8e0ee; vertical-align: -2px; margin: 0 1px 0 2px; }
.search { width: 460px; height: 31px; background: #a6b9d5; color: #233d6e; display: flex; align-items: center; padding-left: 23px; gap: 21px; margin-top: 1px; }
.user { font-size: 14.8px; letter-spacing: -0.15px; padding-top: 2px; }
.avatar { width: 30px; height: 30px; border-radius: 50%; background: #a4262c; display: flex; align-items: center; justify-content: center; font-size: 13.5px; }
.pub .avatar { background: #881798; }
.help { font-size: 18px; }

/* tabs */
.tabs { height: 40px; flex: none; display: grid; font-size: 17px; letter-spacing: -0.3px; line-height: 38px; padding-left: 16px; white-space: nowrap; }
.word .tabs { grid-template-columns: 80px 81px 94px 115px 131px 110px 127px 91px 99px 125px 61px 178px 327px 163px 107px; }
.pub .tabs { grid-template-columns: 80px 81px 94px 159px 127px 91px 99px 100px; }
.tabs b { justify-self: start; width: 55px; height: 37px; letter-spacing: -0.9px; border-bottom: 4px solid #2b579a; color: #333; }
.pub .tabs b { border-color: #14705f; }
.tabs .ctx { color: #2b579a; }
.pill { height: 29px; margin-top: 5px; background: #fff; border: 1px solid #e1dfdd; border-radius: 3px; color: #2b579a; font-weight: 600; font-size: 15.5px; letter-spacing: -0.5px; line-height: 27px; display: flex; align-items: center; gap: 5px; padding-left: 9px; width: 153px; }
.pill + .pill { width: 108px; }

/* ribbon */
.ribbon { height: 118px; flex: none; display: flex; padding-top: 3px; border-bottom: 1px solid #cfcdcb; white-space: nowrap; position: relative; z-index: 2; box-shadow: 0 1px 5px rgba(0,0,0,.18); background: #f3f2f1; }
.group { position: relative; flex: none; height: 108px; border-right: 1px solid #b3b0ad; display: flex; flex-direction: column; }
.group .body { height: 94px; flex: none; }
.label { display: flex; flex: none; height: 20px; align-items: center; font-size: 13px; letter-spacing: -0.2px; }
.label span { flex: 1; text-align: center; }
.label svg { margin-right: 4px; margin-left: 8px; }
.offl svg { color: #a5a5a5; }
.collapse { align-self: flex-end; margin: 0 0 4px auto; margin-right: 12px; transform: scaleY(-1); }
.word .collapse { margin-right: 11px; }
.off { color: #a6a6a6; --acc: #a6a6a6; --eraser: #a6a6a6; --textcolor: #b1aea9; --brushline: #a6a6a6; --brushfill: #e5e5e5; }
.on { color: #333; }
.g-clip { width: 298px; } .g-font { width: 370px; } .g-para { width: 305px; } .g-styles { width: 498px; } .g-edit { width: 152px; } .g-red { width: 92px; } .g-reuse { width: 131px; }
.p-font { width: 327px; } .p-para { width: 273px; } .p-styles { width: 72px; } .p-obj { width: 279px; } .p-org { width: 308px; } .p-edit { width: 153px; }

.big { display: flex; flex-direction: column; align-items: center; text-align: center; padding-top: 4px; line-height: 20px; }
.big span { margin-top: 3px; }
.big span + svg { margin-top: 6px; }
.cliprow { display: flex; --brushline: #e8821a; --brushfill: #fbd7ae; }
.cliprow .big { width: 39px; margin-left: 16px; }
.off-paste { --board: #d6d6d6; --boardline: #b5b5b5; --sheet: #e2e2e2; --sheet2: #ebebeb; --clip: #a0a0a0; }
.on-paste { --board: #f9b23f; --boardline: #ee9a2e; --sheet: #fff; --sheet2: #fff; --clip: #555; }
.list3 { margin-left: 11px; }
.list3 div { height: 30px; display: grid; grid-template-columns: 24px auto; align-items: center; letter-spacing: -0.15px; }

.row { height: 49px; display: grid; align-items: center; }
.row.low { height: 30px; }
.w-font1 { padding-left: 10px; grid-template-columns: 112px 93px 32px 26px 8px 24px 23px 8px 20px; }
.w-font2 { padding-left: 17px; grid-template-columns: 30px 30px 24px 21px 36px 30px 23px 10px 24px 22px 28px 21px 28px 10px; }
.w-para1 { padding-left: 13px; grid-template-columns: 28px 22px 27px 22px 24px 22px 10px 29px 28px 9px 28px 12px 16px; }
.w-para2 { padding-left: 10px; grid-template-columns: 35px 30px 30px 28px 7px 25px 22px 8px 28px 22px 27px 10px; }
.p-font1 { padding-left: 10px; grid-template-columns: 161px 56px 31px 26px 9px 20px; }
.p-font2 { padding-left: 18px; grid-template-columns: 30px 30px 31px 30px 25px 24px 22px 8px 25px 22px 8px 28px 10px; }
.p-para1 { padding-left: 14px; grid-template-columns: 24px 24px 24px 22px 10px 29px 28px 11px 22px 22px 12px 16px; }
.p-para2 { padding-left: 14px; grid-template-columns: 31px 30px 30px 27px 9px 24px 22px 26px 10px; }
.sep { width: 1px; height: 27px; background: #cfcdcb; }
.combo { height: 29px; border: 1px solid #c3c1bf; background: #fff; display: flex; align-items: center; justify-content: space-between; padding: 0 2px; color: #333; width: 110px; overflow: hidden; }
.combo + .combo { width: 86px; }
.combo.gray { background: #dedede; border-color: #bcbcbc; color: #a6a6a6; justify-content: flex-end; width: 158px; }
.combo.gray + .combo.gray { width: 49px; }
.combo.gray svg { box-sizing: content-box; border-left: 1px solid #c2c2c2; padding: 11px 0 11px 4px; }
.g { font-size: 18px; line-height: 22px; letter-spacing: 0; transform: scaleX(.88); transform-origin: 0 50%; white-space: nowrap; }
.it { font-family: "Liberation Serif", serif; font-size: 20px; padding-left: 3px; }
.ul { text-decoration: underline; text-underline-offset: 3px; padding-left: 1px; }
.st { font-size: 16px; }
sub, sup { font-size: 10px; line-height: 0; color: var(--acc); font-weight: 400; }
.bar { margin-top: 4px; align-self: center; transform: translateY(-1px); }
.selbox { width: 28px; height: 29px; background: #cfcecd; border: 1px solid #8a8886; display: flex; align-items: center; padding-left: 4px; }

.gallery { margin: 2px 0 0 11px; width: 473px; height: 75px; background: #fff; border: 1px solid #c8c6c4; display: flex; padding-left: 1px; font-family: Lato, sans-serif; }
.sty { width: 91px; height: 71px; margin-top: 1px; display: flex; flex-direction: column; align-items: center; overflow: hidden; }
.sty.sel { border: 4px solid #c6c6c6; outline: 1px solid #7d7d7d; outline-offset: -1px; }
.sty span { height: 45px; padding-top: 12px; line-height: 30px; font-size: 15.5px; color: #111; letter-spacing: -0.2px; }
.sty.sel span { margin-top: -4px; }
.sty em { font: 14px/22px "Open Sans", sans-serif; letter-spacing: -0.3px; color: #555; }
.sty.t1 span { font-size: 24.5px; color: #2f5f9c; font-weight: 300; letter-spacing: 0; }
.sty.t2 span { font-size: 19.5px; color: #2f5f9c; font-weight: 300; letter-spacing: 0; }
.sty.t3 span { font-size: 41px; padding-top: 5px; font-weight: 300; letter-spacing: 0; }
.gscroll { width: 19px; margin-left: auto; display: grid; grid-template-rows: 25px 24px 24px; }
.gscroll span { border-left: 1px solid #c8c6c4; border-bottom: 1px solid #a19f9d; display: grid; place-items: center; }
.flip { transform: scaleY(-1); }

.edit { padding-left: 14px; margin-top: -1px; }
.edit div { height: 29px; display: flex; align-items: center; }
.edit div svg:first-child { margin-right: 3px; }
.edit svg[width="15"]:first-child { margin-right: 8px; }
.far { margin-left: 12px; } .near { margin: -4px 0 0 3px; }
.rb { font: 13px "Open Sans", sans-serif; fill: #b146c2; } .rc { font: 13px "Open Sans", sans-serif; fill: #1e8bd0; }
.bigs { display: grid; grid-template-columns: 97px 48px 64px 46px; padding-left: 10px; letter-spacing: -0.3px; }
.org { display: grid; grid-template-columns: 83px 111px 110px; }
.org .big { width: 66px; margin-left: 12px; }
.org .edit { padding-left: 0; }
.org .edit div svg:first-child { margin-right: 5px; }

/* word work area */
.wwork { flex: 1; display: flex; background: #e6e6e6; min-height: 0; }
.wcanvas { width: 1900px; overflow: hidden; }
.sheet { position: relative; margin-left: 453px; width: 992px; height: 829px; background: #fff; border: 1px solid #c6c6c6; border-top: 0; overflow: hidden; }
table { border-collapse: collapse; table-layout: fixed; }
td { border: 1px solid #000; padding: 0; vertical-align: top; color: #000; }
.sheet table { margin-left: 73px; }
.tbl1 { width: 621px; font: 16.500px/19.600px "Liberation Sans", Arial, sans-serif; letter-spacing: 0; }
.tbl1 .a { width: 169px; } .tbl1 .b { width: 225px; } .tbl1 .c { width: 226px; }
.tbl1 .cut { height: 27px; } .tbl1 .cut td { border-top: 0; } .tbl1 .tall { height: 161px; }
.tbl1 td { padding: 4px 0 0 5px; white-space: nowrap; }
.tbl1 .wide { letter-spacing: .09px; }
.sheet .tbl2 { margin: 24px 0 0 69px; width: 625px; font: bold 16.5px/22px Lato, sans-serif; }
.tbl2 .a { width: 258px; } .tbl2 .b { width: 366px; }
.tbl2 tr { height: 45.500px; } .tbl2 .last { height: 157px; }
.tbl2 td { padding: 0 0 0 9px; letter-spacing: .3px; }
.sq { text-decoration: none; background: url("data:image/svg+xml,%3Csvg xmlns='http://www.w3.org/2000/svg' width='4' height='3'%3E%3Cpath d='M0 2.500L2 .5l2 2' fill='none' stroke='%23e0262b' stroke-width='.9'/%3E%3C/svg%3E") 0 100% repeat-x; }
.mv { position: absolute; left: 50px; top: 193px; }
.rs { position: absolute; left: 694px; top: 598px; width: 19px; height: 19px; border: 1px solid #8a8a8a; background: #fff; }
.vscroll { width: 19px; background: #f2f2f2; display: flex; flex-direction: column; padding-top: 2px; }
.thumb { background: #fff; border: 1px solid #8c8c8c; }
.wv .thumb { margin-top: 689px; height: 120px; }

/* status bars */
.status { height: 27px; flex: none; border-top: 1px solid #c6c6c6; display: grid; align-items: center; font-size: 13px; letter-spacing: -0.25px; white-space: nowrap; }
.w-status { padding-left: 10px; grid-template-columns: 98px 84px 40px 121px 22px 1100px 21px 64px 34px 66px 41px 16px 131px 26px 40px; }
.p-status { padding-left: 10px; grid-template-columns: 104px 156px 1294px 65px 42px 16px 131px 27px 50px 20px; }
.view { align-self: stretch; display: grid; place-items: center; background: #cfcdcb; width: 50px; }
.tight { letter-spacing: -0.7px; }
.pct { letter-spacing: -0.1px; font-size: 12.500px; color: #555; }
.minus { width: 10px; height: 1px; background: #555; }
.plus { width: 11px; height: 11px; background: linear-gradient(#555, #555) 50%/11px 1px no-repeat, linear-gradient(#555, #555) 50%/1px 11px no-repeat; }
.slider { width: 125px; height: 14px; background: linear-gradient(#333, #333) 60px 0/6px 14px no-repeat, linear-gradient(#444, #444) 0 7px/125px 1px no-repeat; }
.dot { width: 18px; height: 18px; border-radius: 50%; background: #444; }
.xy { width: 18px; height: 14px; background: #444; border: 1px solid #444; box-shadow: inset -2px -2px #fff; color: #fff; font-size: 8px; line-height: 9px; letter-spacing: 0; padding-left: 1px; }

/* publisher work area */
.pwork { flex: 1; min-height: 0; display: grid; grid-template-columns: 175px 29px 1696px 20px; grid-template-rows: 29px 801px 21px; background: #f3f3f3; }
.pages { grid-row: 1 / 4; background: #e6e6e6; border-right: 1px solid #c0c0c0; padding: 8px 0 0 8px; }
.pages h2 { margin: 0; font-size: 28px; font-weight: 400; line-height: 40px; color: #077568; letter-spacing: -1.2px; }
.tri { display: block; width: 10px; height: 9px; margin: 7px 0 0 1px; background: #444; clip-path: polygon(100% 0, 100% 100%, 0 100%); }
.pthumb { margin: 11px 0 0 10px; width: 138px; height: 209px; background: #98cac5; padding: 4px 4px 0; display: flex; flex-direction: column; align-items: center; }
#mini { background: #fff; }
.pthumb b { font-size: 14px; line-height: 20px; font-weight: 600; }
.corner { border-bottom: 1px solid #c6c6c6; border-right: 1px solid #c6c6c6; }
.pv { grid-row: 1 / 4; grid-column: 4; padding-top: 2px; width: 20px; }
.pv .thumb { margin: 307px 0 232px; height: 207px; width: 19px; }
#hruler, #vruler { overflow: hidden; }
#vruler { grid-column: 2; grid-row: 2; }
.rn { font: 13px "Open Sans", sans-serif; letter-spacing: -0.3px; fill: #444; font-weight: 400; }
.pcanvas { grid-column: 3; grid-row: 2; background: #f0f0f0; overflow: hidden; }
.psheet { position: relative; margin-left: 363px; width: 994px; height: 801px; background: #fff; border: 1px solid #bdbdbd; border-width: 0 1px; overflow: hidden; }
.frame { margin-left: 56px; width: 880px; height: 41px; border: 8px solid #9400d9; border-top: 0; border-bottom-width: 7px; padding-left: 6px; font: 20px/5px "Liberation Sans", Arial, sans-serif; color: #111; letter-spacing: -.5px; }
.guide { position: absolute; width: 0; border-left: 1px dashed #7fb6dc; }
.ga { left: 61px; top: 41px; height: 46px; } .gb { left: 61px; top: 598px; bottom: 0; } .gc { left: 932px; top: 41px; bottom: 0; border-left-style: dotted; }
.picture { width: 440px; margin: 69px 0 0 79px; transform: scaleY(1.147); transform-origin: 0 0; font: bold 9.650px/11.400px "Liberation Sans", Arial, sans-serif; letter-spacing: 0; color: #111; }
.picture h3 { margin: 0 0 12.300px; font: 900 9.8px/12px Lato, sans-serif; letter-spacing: .1px; }
.eval { width: 362px; margin-left: 2px; }
.eval .a { width: 99px; } .eval .b { width: 131px; } .eval .c { width: 131px; }
.eval td { border-color: #555; padding: 2.500px 0 0 3px; white-space: nowrap; color: #111; }
.eval tr { height: 28.800px; } .eval .r0 { height: 17.400px; } .eval .r8 { height: 74.700px; } .eval .r9 { height: 97.800px; }
.eval .n { font-weight: 400; color: #333; }
.eval .sq { background-size: 2.7px 2px; }
.pmv { position: absolute; left: 68px; top: 590px; }
.hscroll { grid-column: 2 / 4; grid-row: 3; background: #f2f2f2; display: grid; grid-template-columns: 311px 1390px 19px; padding: 1px 0 0 2px; }
.hscroll .thumb { width: 1066px; height: 19px; }
```
FILE: rulers.js
```js
const NS = 'http://www.w3.org/2000/svg';
const CM = 47.22;

function add(svg, tag, attrs, text) {
  const el = document.createElementNS(NS, tag);
  for (const k in attrs) el.setAttribute(k, attrs[k]);
  if (text !== undefined) el.textContent = text;
  svg.appendChild(el);
}
function line(svg, x1, y1, x2, y2, color, w) {
  add(svg, 'line', { x1, y1, x2, y2, stroke: color || '#555', 'stroke-width': w || 1 });
}

// Horizontal ruler: centimetres, zero at the left edge of the sheet
const h = document.getElementById('hruler');
for (let i = -77; i <= 281; i++) {
  const x = Math.round(365 + i * CM / 10) + 0.5;
  if (x < 0 || x > 1694) continue;
  const top = i % 10 === 0 ? 2 : i % 5 === 0 ? 13 : 17;
  line(h, x, top, x, 22);
  if (i % 10 === 0) add(h, 'text', { x: x + 2, y: 14, class: 'rn' }, Math.abs(i / 10));
}
line(h, 0, 22.5, 1696, 22.5, '#c4c4c4');
line(h, 0, 28.5, 1696, 28.5, '#b8b8b8');

// Vertical ruler
const v = document.getElementById('vruler');
for (let i = 113; i <= 285; i++) {
  const y = Math.round(35.5 + (i - 120) * CM / 10) + 0.5;
  if (y < 0) continue;
  const left = i % 10 === 0 ? 2 : i % 5 === 0 ? 12 : 18;
  line(v, left, y, 22, y);
}
for (let n = 11; n <= 28; n++) add(v, 'text', { x: 4, y: 35.5 + (n - 12) * CM + 14, class: 'rn' }, n);
line(v, 22.5, 0, 22.5, 801, '#c4c4c4');
line(v, 28.5, 0, 28.5, 801, '#c4c4c4');
line(v, 2, 214.5, 22, 214.5, '#000', 1.5);

// Page miniature: frames, lines of text and the table
const m = document.getElementById('mini');
const dash = (x1, x2, y, n) => add(m, 'line', { x1, x2, y1: y, y2: y, stroke: '#555', 'stroke-width': 1.2, opacity: 0.75, 'stroke-dasharray': ['5 1 8 1 3 1', '9 1 4 1 7 1 2 1', '3 1 6 1 10 1'][n % 3] });
const box = (y, hgt, gap) => {
  add(m, 'path', { d: `M${gap} ${y}H122V${y + hgt}H9V${y}H11`, fill: 'none', stroke: '#b04de0', 'stroke-width': 1.3 });
};
box(12, 13, 32); dash(13, 30, 12, 0); dash(11, 116, 18.500, 1); dash(11, 42, 21.500, 2);
box(32, 43, 43); dash(13, 41, 33, 2);
[38, 41, 44, 47, 51, 54, 57, 60, 63, 66, 69].forEach((y, i) => dash(11, [121, 118, 121, 92, 120, 120, 118, 118, 119, 118, 18][i], y, i));
dash(12, 23, 86, 0);
add(m, 'rect', { x: 11, y: 89, width: 47, height: 58, fill: 'none', stroke: '#ddd' });
line(m, 24.5, 89, 24.5, 147, '#ddd'); line(m, 41.5, 89, 41.5, 133, '#ddd');
[95, 99, 103, 108, 112, 117, 121, 132].forEach(y => line(m, 11, y, 58, y, '#ddd', 0.7));
[92.5, 97, 101, 104, 106, 109, 113, 115, 118, 122, 124, 134, 136].forEach(y => line(m, 12, y, 21, y, '#a88', 1.1));
dash(25, 35, 90.5, 0); dash(42, 51, 90.5, 1); dash(25, 31, 134, 0); dash(37, 55, 134, 1);
```
